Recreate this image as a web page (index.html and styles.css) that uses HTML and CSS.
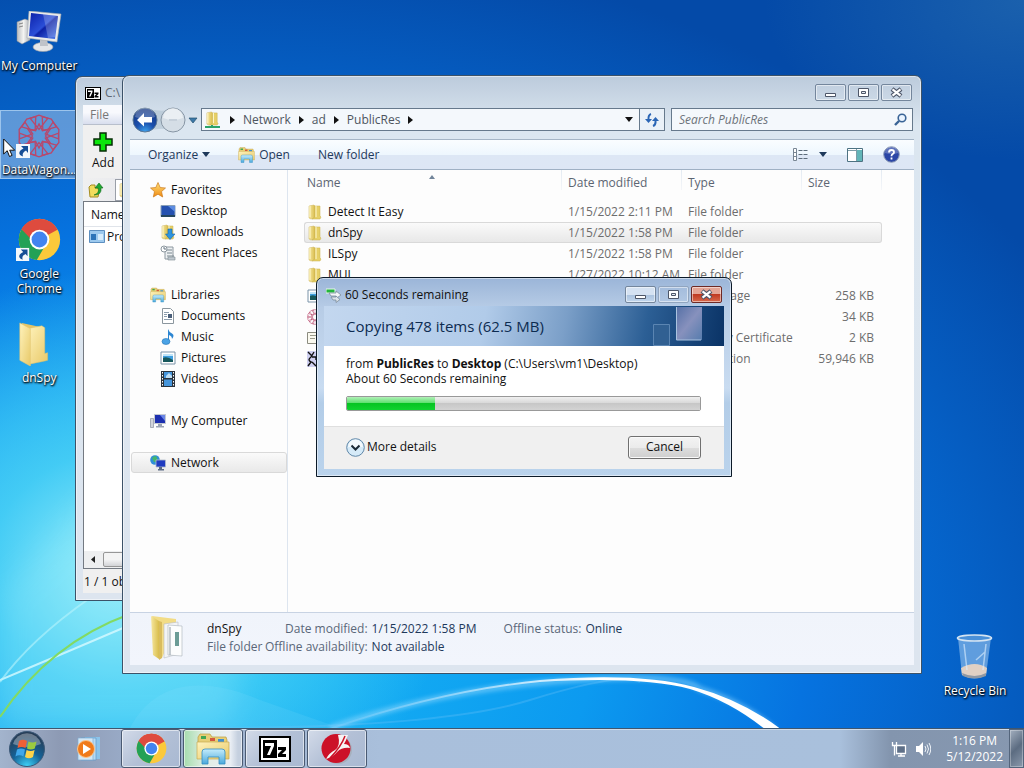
FILE: index.html
```html
<!DOCTYPE html>
<html lang="en">
<head>
  <meta charset="UTF-8" />
  <meta name="viewport" content="width=device-width, initial-scale=1.0"/>
  <title>Desktop</title>
  <link rel="stylesheet" href="styles.css">
</head>
<body>
  <!-- shared icons -->
  <svg class="defs" width="0" height="0" aria-hidden="true">
    <defs>
      <linearGradient id="gFolder" x1="0" y1="0" x2="1" y2="0"><stop offset="0" stop-color="#f6e7a0"/><stop offset="1" stop-color="#d9bd4c"/></linearGradient>
      <linearGradient id="gFront" x1="0" y1="0" x2="1" y2="1"><stop offset="0" stop-color="#fff3bd"/><stop offset="1" stop-color="#e8c968"/></linearGradient>
      <linearGradient id="gScreen" x1="0" y1="0" x2="1" y2="1"><stop offset="0" stop-color="#0a1fa8"/><stop offset=".5" stop-color="#2b4fd8"/><stop offset=".55" stop-color="#0d22a6"/><stop offset="1" stop-color="#4a7bf0"/></linearGradient>
      <linearGradient id="gCase" x1="0" y1="0" x2="1" y2="0"><stop offset="0" stop-color="#b9bcc0"/><stop offset=".5" stop-color="#f4f4f2"/><stop offset="1" stop-color="#a9adb4"/></linearGradient>
      <linearGradient id="gStar" x1="0" y1="0" x2="0" y2="1"><stop offset="0" stop-color="#ffe27a"/><stop offset="1" stop-color="#f08a12"/></linearGradient>
      <linearGradient id="gLib" x1="0" y1="0" x2="0" y2="1"><stop offset="0" stop-color="#c5ecfb"/><stop offset="1" stop-color="#4aa9dc"/></linearGradient>
      <radialGradient id="gBack" cx=".5" cy="1" r=".9"><stop offset="0" stop-color="#3fa5ee"/><stop offset=".45" stop-color="#1b50ad"/><stop offset="1" stop-color="#173a86"/></radialGradient>
      <radialGradient id="gOrb" cx=".5" cy="1" r=".9"><stop offset="0" stop-color="#3fd5fa"/><stop offset=".5" stop-color="#146297"/><stop offset="1" stop-color="#263d57"/></radialGradient>
    </defs>
    <symbol id="i-folder" viewBox="0 0 16 16">
      <path d="M2 2l5-1 1 1v12l-4 1-2-1z" fill="url(#gFolder)" stroke="#cdb35a" stroke-width=".5"/>
      <path d="M8 2h5v10l1 1-1 2H5l3-2z" fill="#e6d067" stroke="#c9b04e" stroke-width=".5"/>
      <path d="M9 2v11M3 2v11" stroke="#fff8d0" stroke-width="1"/>
    </symbol>
    <symbol id="i-bigfolder" viewBox="0 0 32 46">
      <path d="M3 1l23 5v28l-2 3-14 7z" fill="#e6c566"/>
      <path d="M9 7l15-3 3 2v27l3-1v8l-4 1-15 3z" fill="url(#gFront)" stroke="#dcc06a" stroke-width=".5"/>
      <path d="M1 1l11 6v39L1 40z" fill="url(#gFront)" stroke="#e3c775" stroke-width=".6"/>
    </symbol>
    <symbol id="i-computer" viewBox="0 0 46 42">
      <path d="M1 11l8-3 5 2v19l-8 4-5-3z" fill="url(#gCase)" stroke="#8b8f96" stroke-width=".5"/>
      <path d="M3 13l4-1M3 16l4-1" stroke="#888"/>
      <ellipse cx="27" cy="36" rx="10" ry="4.500" fill="#e4e6e8" stroke="#9a9ea5" stroke-width=".6"/>
      <path d="M24 27h7l1 8h-8z" fill="#bfc3c9"/>
      <path d="M13 0l32 3-4 28-30-4z" fill="#e9ebec" stroke="#a3a7ad" stroke-width=".6"/>
      <path d="M15 2l27 3-3 23-26-3z" fill="url(#gScreen)"/>
      <path d="M27 3l15 2-3 21-7 1z" fill="#fff" opacity=".22"/>
    </symbol>
    <symbol id="i-chrome" viewBox="0 0 48 48">
      <circle cx="24" cy="24" r="23" fill="#fbc93b"/>
      <path d="M24 24L4 12.500A23 23 0 0 1 44 13z" fill="#de4b3e"/>
      <path d="M4 12.500a23 23 0 0 0 17 34.300L32 28l-8 5z" fill="#23a156"/>
      <path d="M4 12.500L16 32l8-8-4-10z" fill="#23a156"/>
      <path d="M24 13h20a23 23 0 0 0-40-.5L15 24z" fill="#de4b3e"/>
      <circle cx="24" cy="24" r="11" fill="#fff"/><circle cx="24" cy="24" r="8.800" fill="#4284f0"/>
    </symbol>
    <symbol id="i-shortcut" viewBox="0 0 14 14">
      <path d="M0 0h14v14H0z" fill="#f4f8fc"/>
      <path d="M5 2h7v7l-2-2.500C7 8 6 10 7 12.500 2 11 2 7 7.500 4.500z" fill="#164e96"/>
    </symbol>
    <symbol id="i-7z" viewBox="0 0 32 26">
      <path d="M0 0h32v26H0z" fill="#000"/><path d="M2 2h28v22H2z" fill="#fff"/><path d="M4 4h14v18H4z" fill="#000"/>
      <path d="M6 7h9v3l-4 9H8l4-9H6z" fill="#fff"/><path d="M19 11h8v3l-4 4h4v3h-8v-3l4-4h-4z" fill="#000"/>
    </symbol>
    <symbol id="i-library" viewBox="0 0 34 32">
      <path d="M2 4l2-3h10l2 3h14l1 3v18H2z" fill="#e7cf76" stroke="#b99b42" stroke-width=".7"/>
      <path d="M5 3h5v3H5z" fill="#40a653"/><path d="M14 5h5v3h-5z" fill="#d3583e"/><path d="M22 6h6v3h-6z" fill="#408fd0"/>
      <path d="M1 9h32v17H1z" fill="url(#gFront)" stroke="#c7ab50" stroke-width=".7"/>
      <path d="M6 31V19q0-3 3-3h17q3 0 3 3v12h-6v-7H12v7z" fill="url(#gLib)" stroke="#338dc2" stroke-width=".8"/>
    </symbol>
    <symbol id="i-web" viewBox="0 0 40 40">
      <g fill="none" stroke="#b8486c" stroke-width="1.200">
        <path id="petal" d="M20 14L12 4l8-3 8 3z"/>
        <use href="#petal" transform="rotate(36 20 20)"/><use href="#petal" transform="rotate(72 20 20)"/><use href="#petal" transform="rotate(108 20 20)"/>
        <use href="#petal" transform="rotate(144 20 20)"/><use href="#petal" transform="rotate(180 20 20)"/><use href="#petal" transform="rotate(216 20 20)"/>
        <use href="#petal" transform="rotate(252 20 20)"/><use href="#petal" transform="rotate(288 20 20)"/><use href="#petal" transform="rotate(324 20 20)"/>
        <path d="M20 9l3 6 7-1-4 6 4 6-7-1-3 6-3-6-7 1 4-6-4-6 7 1z"/>
      </g>
    </symbol>
    <symbol id="i-picture" viewBox="0 0 16 16">
      <path d="M1 2h14v12H1z" fill="#fff" stroke="#7b93a8"/><path d="M3 4h10v8H3z" fill="#3f9fdf"/><path d="M3 8q4-2 10 2v2H3z" fill="#17585c"/><path d="M3 4h10v2H3z" fill="#bfe4f8"/>
    </symbol>
    <symbol id="i-min" viewBox="0 0 31 17"><path d="M10.500 9.500h10v3h-10z" fill="#fff" stroke="#4d5668"/></symbol>
    <symbol id="i-max" viewBox="0 0 31 17"><path d="M10.500 4.500h10v8h-10z" fill="#fff" stroke="#4d5668"/><path d="M13.500 7.500h4v2h-4z" fill="#e4ebf3" stroke="#4d5668"/></symbol>
    <symbol id="i-close" viewBox="0 0 31 17"><path d="M11 5l9 7M20 5l-9 7" stroke="#4d5668" stroke-width="4.500"/><path d="M11.500 5.400l8 6.200M19.500 5.400l-8 6.200" stroke="#fff" stroke-width="2.200"/></symbol>
    <symbol id="i-down" viewBox="0 0 8 5"><path d="M0 0h8L4 5z" fill="currentColor"/></symbol>
    <symbol id="i-right" viewBox="0 0 5 8"><path d="M0 0v8l5-4z" fill="#111"/></symbol>
  </svg>

  <main class="desktop">
    <svg class="wallpaper" viewBox="0 0 1024 728" preserveAspectRatio="none" aria-hidden="true">
      <defs>
        <filter id="soft" x="-20%" y="-50%" width="140%" height="200%"><feGaussianBlur stdDeviation="2"/></filter>
        <filter id="haze"><feGaussianBlur stdDeviation="14"/></filter>
        <linearGradient id="gArc" gradientUnits="userSpaceOnUse" x1="340" y1="0" x2="600" y2="0"><stop offset="0" stop-color="#8fd2fb" stop-opacity=".3"/><stop offset="1" stop-color="#fff"/></linearGradient>
      </defs>
      <path d="M0 590Q60 540 140 440T300 300L230 728H0z" fill="#a9f3fb" opacity=".22" filter="url(#haze)"/>
      <path d="M130 728C150 690 190 670 260 700L340 728z" fill="#9fe9fb" opacity=".12"/>
      <g fill="none">
        <path d="M0 680Q60 655 130 625" stroke="#d8faff" stroke-width="2" opacity=".8"/>
        <path d="M0 682Q30 640 90 598" stroke="#b8f3fb" stroke-width="2" opacity=".6"/>
        <path d="M0 717Q50 643 130 614" stroke="#83da62" stroke-width="2"/>
        <path d="M200 728Q440 728 530 700T640 682" stroke="#6fc4f8" stroke-width="2" opacity=".3"/>
        <path d="M330 728Q440 690 560 681T700 689Q745 703 775 730" stroke="#9bdcff" stroke-width="6" opacity=".5" filter="url(#soft)"/>
      </g>
      <path d="M330 728Q440 690 540 680Q640 672 694 687Q742 700 782 730H766Q730 701 690 689Q640 676 540 682Q440 692 333 729z" fill="url(#gArc)"/>
    </svg>

    <div class="shortcuts">
      <a class="shortcut" href="#"><svg class="pic" viewBox="0 0 46 42"><use href="#i-computer"/></svg><span>My Computer</span></a>
      <a class="shortcut selected" href="#"><svg class="pic" viewBox="0 0 46 44"><use href="#i-web" x="0" y="0" width="46" height="44"/><use href="#i-shortcut" x="0" y="30" width="14" height="14"/></svg><span>DataWagon...</span></a>
      <a class="shortcut" href="#"><svg class="pic" viewBox="0 0 48 46"><use href="#i-chrome" x="2" y="0" width="45" height="45"/><use href="#i-shortcut" x="0" y="31" width="14" height="14"/></svg><span>Google<br>Chrome</span></a>
      <a class="shortcut" href="#"><svg class="pic" viewBox="0 0 48 46"><use href="#i-bigfolder" x="3" y="0" width="32" height="46"/></svg><span>dnSpy</span></a>
    </div>

    <a class="shortcut recycle" href="#">
      <svg class="pic" viewBox="0 0 40 46">
        <path d="M3 4l4 37q13 7 24 0l5-37z" fill="#b9d9f5" opacity=".5"/>
        <path d="M6 34q14-8 26 0l-1 7q-12 6-24 0z" fill="#e0d0c4"/>
        <path d="M7 39q13 6 24 0v3q-12 5-23 0z" fill="#8f98a4"/>
        <path d="M9 10l3 26M31 10l-3 26M30 18l-9 8" stroke="#e1f1ff" stroke-width="1.500" opacity=".6"/>
        <ellipse cx="19.500" cy="4" rx="17" ry="3" fill="#4a90d8" stroke="#d5e4f2" stroke-width="1.600"/>
      </svg>
      <span>Recycle Bin</span>
    </a>

    <section class="window archiver">
      <header class="archiver-title"><svg width="16" height="13"><use href="#i-7z"/></svg><span>C:\</span></header>
      <div class="archiver-menu">File</div>
      <div class="archiver-tools">
        <button class="add-btn"><svg width="20" height="20" viewBox="0 0 20 20"><path d="M7 1h6v6h6v6h-6v6H7v-6H1V7h6z" fill="#0be60b" stroke="#062c06" stroke-width="1.500"/></svg>Add</button>
      </div>
      <div class="archiver-path">
        <svg width="16" height="16" viewBox="0 0 16 16"><path d="M1 5l2-2h4v3h5l-2 9H2z" fill="#f2dc5c" stroke="#a58c20"/><path d="M6 13q6-2 4-7H7l4-5 4 5h-2q1 7-7 7z" fill="#21a832" stroke="#116a1c" stroke-width=".6"/></svg>
        <div class="archiver-drop"><svg width="16" height="16"><use href="#i-folder"/></svg></div>
      </div>
      <div class="archiver-list">
        <div class="archiver-head">Name</div>
        <div class="archiver-row"><svg width="16" height="14" viewBox="0 0 16 14"><path d="M.5.5h15v12H.5z" fill="#9cc9ee" stroke="#5c8fc0"/><path d="M2 4h5v6H2z" fill="#2d74b8"/><path d="M9 4h5v6H9z" fill="#d6ecfb"/></svg>Program</div>
        <div class="archiver-scroll"><svg width="4" height="7" viewBox="0 0 4 7"><path d="M4 0v7L0 3.500z" fill="#222"/></svg><i></i></div>
      </div>
      <footer class="archiver-status">1 / 1 object</footer>
    </section>

    <section class="window explorer">
      <header class="caption">
        <button aria-label="Minimize"><svg><use href="#i-min"/></svg></button>
        <button aria-label="Maximize"><svg><use href="#i-max"/></svg></button>
        <button aria-label="Close"><svg><use href="#i-close"/></svg></button>
      </header>

      <nav class="navbar">
        <button class="nav-history" aria-label="Back and forward">
          <svg width="66" height="26" viewBox="0 0 66 26">
            <path d="M14 1q14 5 28 1v22q-14-5-28 1z" fill="#aebfcd" opacity=".6"/>
            <circle cx="13" cy="13" r="12" fill="url(#gBack)" stroke="#5c7896"/>
            <path d="M3 10a10 10 0 0 1 20 0q-10 4-20 0z" fill="#fff" opacity=".25"/>
            <path d="M5 13l7-7v4h8v5.500h-8v4z" fill="#fff"/>
            <circle cx="41" cy="13" r="12" fill="#d5dee6" stroke="#8796a5"/>
            <path d="M31 11a10 10 0 0 1 20 0q-10 4-20 0z" fill="#fff" opacity=".5"/>
            <path d="M37 13h8" stroke="#c6d0da" stroke-width="2"/>
            <path d="M57 11h8l-4 5z" fill="#3c78a8" stroke="#23506f" stroke-width=".7"/>
          </svg>
        </button>
        <div class="address">
          <svg width="18" height="18" viewBox="0 0 18 18"><use href="#i-folder" x="1" y="0" width="15" height="15"/><path d="M1 16h15M8 14v3" stroke="#2ba36b" stroke-width="2"/></svg>
          <svg width="5" height="8"><use href="#i-right"/></svg><a href="#">Network</a>
          <svg width="5" height="8"><use href="#i-right"/></svg><a href="#">ad</a>
          <svg width="5" height="8"><use href="#i-right"/></svg><a href="#">PublicRes</a>
          <svg width="5" height="8"><use href="#i-right"/></svg>
          <svg class="push" width="8" height="5"><use href="#i-down"/></svg>
        </div>
        <button class="refresh" aria-label="Refresh"><svg width="14" height="14" viewBox="0 0 14 14"><path d="M6 1Q3 2 3.500 7M8 13q3-1 2.500-6" fill="none" stroke="#2a65b5" stroke-width="2"/><path d="M0 6h7l-3.500 4zM7 8h7l-3.500-4z" fill="#2a65b5"/></svg></button>
        <div class="search">
          <input type="text" placeholder="Search PublicRes" aria-label="Search PublicRes">
          <svg width="13" height="13" viewBox="0 0 13 13"><circle cx="8" cy="5" r="3.800" fill="#eaf4ff" stroke="#3a6496" stroke-width="1.600"/><path d="M5 8l-4 4" stroke="#3a6496" stroke-width="2.400"/></svg>
        </div>
      </nav>

      <div class="toolbar">
        <button class="organize">Organize <svg width="8" height="5"><use href="#i-down"/></svg></button>
        <button class="open"><svg width="17" height="16"><use href="#i-library"/></svg>Open</button>
        <button>New folder</button>
        <button class="push views" aria-label="Views">
          <svg width="16" height="13" viewBox="0 0 16 13"><path d="M.5.5h3v12h-3z" fill="#fff" stroke="#788694"/><path d="M1 4.500h2M1 8.500h2" stroke="#788694"/><path d="M5.500 2.500h4m1 0h4m-9 4h4m1 0h4m-9 4h4m1 0h4" stroke="#5c6b7a"/></svg>
          <svg width="8" height="5"><use href="#i-down"/></svg>
        </button>
        <button aria-label="Preview pane"><svg width="16" height="14" viewBox="0 0 16 14"><path d="M.5.5h15v13H.5z" fill="#fff" stroke="#4d7282"/><path d="M10 2h5v11h-5z" fill="#62b5b8"/><path d="M1 2.500h9M9.500 1v12" stroke="#7e9da8"/></svg></button>
        <button aria-label="Help"><svg width="17" height="17" viewBox="0 0 17 17"><circle cx="8.500" cy="8.500" r="7.800" fill="#2b46a6" stroke="#8d9cb6"/><path d="M2 7a6.500 6.500 0 0 1 13 0q-6 2-13 0z" fill="#fff" opacity=".25"/><path d="M6 6.500q0-2.500 2.500-2.500T11 6.300q0 1-1.300 1.800T8.500 10.200M8.500 11.500v2" fill="none" stroke="#fff" stroke-width="1.800"/></svg></button>
      </div>

      <div class="content">
        <aside class="sidebar">
          <ul>
            <li><a href="#"><svg viewBox="0 0 16 16"><path d="M8 .5l2.200 5 5.300.5-4 3.600 1.200 5.400L8 12.200 3.300 15l1.200-5.400L.5 6l5.300-.5z" fill="url(#gStar)" stroke="#cc7a1c" stroke-width=".7"/></svg>Favorites</a></li>
            <li class="sub"><a href="#"><svg viewBox="0 0 16 16"><path d="M1 2.500h14v11H1z" fill="#2551b0" stroke="#8aa0b8"/><path d="M8 3h7v6z" fill="#5d8ce0"/><path d="M1 12h14v2H1z" fill="#25465e"/></svg>Desktop</a></li>
            <li class="sub"><a href="#"><svg viewBox="0 0 16 16"><use href="#i-folder"/><path d="M8 5h4v5h3l-5 5.500L5.500 10H8z" fill="#2f95df" stroke="#1565a8" stroke-width=".6"/></svg>Downloads</a></li>
            <li class="sub"><a href="#"><svg viewBox="0 0 16 16"><path d="M5 2h8v12H5z" fill="#edf0f2" stroke="#8c979f"/><path d="M7 5h5M7 8h5M7 11h7" stroke="#79878f"/><circle cx="4" cy="4" r="3" fill="#fff" stroke="#8c979f"/><path d="M4 2v2h2" fill="none" stroke="#657580"/><path d="M8 12h7v3H8z" fill="#bfc8cf" stroke="#7c8992" stroke-width=".6"/></svg>Recent Places</a></li>
          </ul>
          <ul>
            <li><a href="#"><svg viewBox="0 0 16 16"><use href="#i-library"/></svg>Libraries</a></li>
            <li class="sub"><a href="#"><svg viewBox="0 0 16 16"><path d="M2.500.5h8l3 3v12h-11z" fill="#fff" stroke="#8b969e"/><path d="M4 4.500h5M4 6.500h3M4 8.500h3M4 11.500h8" stroke="#8c9dad"/><path d="M8 6h4v4H8z" fill="#4a5f7a"/></svg>Documents</a></li>
            <li class="sub"><a href="#"><svg viewBox="0 0 16 16"><path d="M8 12V0q1 3 4 4.500T12 10q0-3-3-4v6.500z" fill="#2c86d2"/><ellipse cx="6" cy="12.500" rx="4" ry="3" fill="#4ba3e6" stroke="#2373b5" stroke-width=".6"/></svg>Music</a></li>
            <li class="sub"><a href="#"><svg viewBox="0 0 16 16"><use href="#i-picture"/></svg>Pictures</a></li>
            <li class="sub"><a href="#"><svg viewBox="0 0 16 16"><path d="M1 0h14v16H1z" fill="#2b333c"/><path d="M4 1h8v6H4zM4 8.500h8v6.500H4z" fill="#4696dc"/><path d="M6 5l3-3 3 3v2H6z" fill="#bfdff5"/><path d="M2.500 1v14M13.500 1v14" stroke="#fff" stroke-dasharray="1.500 1.500"/></svg>Videos</a></li>
          </ul>
          <ul>
            <li><a href="#"><svg viewBox="0 0 16 16"><path d="M.5 5.500h3v9h-3z" fill="#d2d5dc" stroke="#8d93a0" stroke-width=".7"/><path d="M4.500 1.500h11v9h-11z" fill="#1c2fb0" stroke="#c3c8d2"/><path d="M10 2h5v6z" fill="#6a86e6"/><path d="M8 11h4v2h2v1.500H6V13h2z" fill="#9aa3b4"/></svg>My Computer</a></li>
          </ul>
          <ul>
            <li class="current"><a href="#"><svg viewBox="0 0 16 16"><circle cx="5" cy="5" r="4.800" fill="#2e8fd8"/><path d="M2 3q4-4 5 0T4 7z" fill="#45b56d"/><path d="M6 5h9.500v7H6z" fill="#1f3bc0" stroke="#b3bdca" stroke-width=".8"/><path d="M9 12h3v2h2v1.500H8V14h1z" fill="#5b6b86"/></svg>Network</a></li>
          </ul>
        </aside>

        <div class="files">
          <table>
            <colgroup><col><col class="c-date"><col class="c-type"><col class="c-size"></colgroup>
            <thead>
              <tr><th class="sorted">Name</th><th>Date modified</th><th>Type</th><th>Size</th></tr>
            </thead>
            <tbody>
              <tr><td><svg><use href="#i-folder"/></svg>Detect It Easy</td><td>1/15/2022 2:11 PM</td><td>File folder</td><td></td></tr>
              <tr class="active"><td><svg><use href="#i-folder"/></svg>dnSpy</td><td>1/15/2022 1:58 PM</td><td>File folder</td><td></td></tr>
              <tr><td><svg><use href="#i-folder"/></svg>ILSpy</td><td>1/15/2022 1:58 PM</td><td>File folder</td><td></td></tr>
              <tr><td><svg><use href="#i-folder"/></svg>MUI</td><td>1/27/2022 10:12 AM</td><td>File folder</td><td></td></tr>
              <tr><td><svg><use href="#i-picture"/></svg></td><td></td><td>PNG image</td><td>258 KB</td></tr>
              <tr><td><svg><use href="#i-web"/></svg></td><td></td><td></td><td>34 KB</td></tr>
              <tr><td><svg viewBox="0 0 16 16"><path d="M.5 2.500h15v11H.5z" fill="#fbfaf0" stroke="#8c8c80"/><path d="M3 5.500h8M3 8.500h5" stroke="#9c9c8c"/></svg></td><td></td><td>Security Certificate</td><td>2 KB</td></tr>
              <tr><td><svg viewBox="0 0 16 16"><path d="M0 0h16v16H0z" fill="#cfd0f0"/><path d="M1 1l4 4M7 1L4 6q-4 3 0 5l-3 4M5 11l4 4M5 6h4v3" fill="none" stroke="#111" stroke-width="1.400"/></svg></td><td></td><td>Application</td><td>59,946 KB</td></tr>
            </tbody>
          </table>
        </div>
      </div>

      <footer class="details">
        <svg width="38" height="46" viewBox="0 0 38 46">
          <path d="M2 1l24 3v6l-14 33z" fill="#f2dc86"/>
          <path d="M14 9l14-2v32l-14 4z" fill="#f3f4f5" stroke="#b9bec4" stroke-width=".6"/>
          <path d="M18 10l14 1v30l-14-1z" fill="#fcfdfd" stroke="#aab2ba" stroke-width=".6"/>
          <path d="M25 17h4v14h-4z" fill="#6c9c96"/><path d="M20 12v28" stroke="#8e9aa3"/>
          <path d="M1 1l8 5v38l-6-4z" fill="url(#gFolder)"/>
          <path d="M9 6l3 1v36l-3 2z" fill="#d9bc5e"/>
        </svg>
        <div class="facts">
          <strong>dnSpy</strong><span class="label">Date modified:</span><span>1/15/2022 1:58 PM</span><span class="label">Offline status:</span><span>Online</span>
          <span class="kind">File folder</span><span class="label">Offline availability:</span><span>Not available</span>
        </div>
      </footer>
    </section>

    <section class="window dialog" role="dialog" aria-label="60 Seconds remaining">
      <header class="caption">
        <svg width="16" height="16" viewBox="0 0 16 16"><path d="M0 2h9v4H0z" fill="#23b53c" stroke="#e4f7e6"/><path d="M3 6h7V4l5 4-5 3.500V9H5z" fill="#f5f7f8" stroke="#7c8d9c" stroke-width=".8"/><path d="M5 10h5v-1l4 3.500-4 3V13H7z" fill="#dfe5ea" stroke="#7c8d9c" stroke-width=".8"/></svg>
        <h2>60 Seconds remaining</h2>
        <button aria-label="Minimize"><svg><use href="#i-min"/></svg></button>
        <button aria-label="Maximize" disabled><svg><use href="#i-max"/></svg></button>
        <button class="close" aria-label="Close"><svg><use href="#i-close"/></svg></button>
      </header>
      <div class="banner">
        <h1>Copying 478 items (62.5 MB)</h1>
        <svg width="110" height="40" viewBox="0 0 110 40" aria-hidden="true">
          <defs><linearGradient id="gTile" x1="0" y1="0" x2="1" y2="1"><stop offset="0" stop-color="#5570a6"/><stop offset=".5" stop-color="#8791bd"/><stop offset="1" stop-color="#567cad"/></linearGradient></defs>
          <path d="M39.500 18.500h16v21h-16z" fill="#316092" stroke="#5b85b2"/>
          <path d="M62 1h26v33H62z" fill="url(#gTile)"/><path d="M62.500 1v33H87" fill="none" stroke="#aac3e0"/>
        </svg>
      </div>
      <div class="dialog-body">
        <p>from <b>PublicRes</b> to <b>Desktop</b> (C:\Users\vm1\Desktop)</p>
        <p>About 60 Seconds remaining</p>
        <progress value="25" max="100" aria-label="Copy progress"></progress>
      </div>
      <footer class="dialog-foot">
        <button class="more"><svg width="19" height="19" viewBox="0 0 19 19"><circle cx="9.500" cy="9.500" r="8.800" fill="#d5eaf8" stroke="#5f87a8"/><path d="M2 9a7.500 7.500 0 0 1 15 0z" fill="#fff" opacity=".7"/><path d="M5.500 7.500l4 4 4-4" fill="none" stroke="#1b2a36" stroke-width="2"/></svg>More details</button>
        <button class="cancel">Cancel</button>
      </footer>
    </section>

    <svg class="cursor" width="13" height="20" viewBox="0 0 13 20"><path d="M.7 1v15l3.500-3.300L6.500 18.500l2.600-1.100-2.400-5.200h5z" fill="#fff" stroke="#111"/></svg>
  </main>

  <footer class="taskbar">
    <button class="start" aria-label="Start">
      <svg width="38" height="38" viewBox="0 0 38 38">
        <circle cx="19" cy="19" r="17.500" fill="url(#gOrb)" stroke="#3b5877"/>
        <path d="M5 14a14.500 14.500 0 0 1 28 0q-14 6-28 0z" fill="#fff" opacity=".32"/>
        <path d="M11 11q4-2.500 8 0l-1.500 7q-4-2-8 0z" fill="#ef6036"/><path d="M20.500 11.500q4 2 8 0l-1.700 7q-4 2-7.800 0z" fill="#9bcb3f"/>
        <path d="M9 19.500q4-2 8 0l-1.600 7q-4-2.500-8 0z" fill="#3fa7ea"/><path d="M18.600 20q4 2.200 8 0L25 27q-4 2.500-8 0z" fill="#fcd34a"/>
      </svg>
    </button>
    <button class="pinned" aria-label="Media Player">
      <svg width="26" height="26" viewBox="0 0 26 26"><path d="M9 1h15v22H9z" fill="#8cc4ea"/><path d="M5 2h15v22H5z" fill="#b7daf2" stroke="#5f9ac8" stroke-width=".7"/><path d="M2 2h15v22H2z" fill="#d3e7f5" stroke="#7eaed2" stroke-width=".7"/><circle cx="10" cy="13" r="8.500" fill="#f07a1a" stroke="#fbc48b"/><path d="M7 8l8 5-8 5z" fill="#fff"/></svg>
    </button>
    <div class="apps">
      <button aria-label="Google Chrome"><svg width="31" height="31"><use href="#i-chrome"/></svg></button>
      <button class="busy" aria-label="Windows Explorer"><svg width="34" height="32"><use href="#i-library"/></svg></button>
      <button aria-label="7-Zip"><svg width="32" height="26"><use href="#i-7z"/></svg></button>
      <button aria-label="Viewer"><svg width="32" height="32" viewBox="0 0 32 32"><circle cx="17" cy="17" r="14" fill="#a6b0bd"/><circle cx="15" cy="15.500" r="14.500" fill="#cc1128"/><path d="M17 2h10q-2 6-4 9 5 0 6 4-8-1-13 4-4 5-11 7 3-6 9-9 6-4 3-15z" fill="#f6f3f3"/><path d="M24 3Q20 14 9 25" stroke="#cc1128" fill="none" stroke-width="1.500"/></svg></button>
    </div>
    <div class="tray">
      <svg width="16" height="16" viewBox="0 0 16 16"><path d="M5.500 4.500h9v8h-9z" fill="#5f7088" stroke="#fff" stroke-width="1.300"/><path d="M1.500 1v3.500h4V1M3.500 4.500v10M7 15h7M10 12v3" fill="none" stroke="#fff" stroke-width="1.300"/></svg>
      <svg width="16" height="16" viewBox="0 0 16 16"><path d="M1 5h3l4-4v14l-4-4H1z" fill="#fff"/><path d="M10 5q2 3 0 6M12 3.500q3 4.500 0 9M14 2q3.500 6 0 12" fill="none" stroke="#eef3f8"/></svg>
    </div>
    <div class="clock"><time>1:16 PM</time><time>5/12/2022</time></div>
    <button class="peek" aria-label="Show desktop"></button>
  </footer>
</body>
</html>
```

FILE: styles.css
```css
* {
  box-sizing: border-box;
}

body {
  margin: 0;
  height: 100vh;
  display: flex;
  flex-direction: column;
  overflow: hidden;
  font-family: "Open Sans", "Noto Sans", sans-serif;
  font-size: 12px;
  line-height: 16px;
  color: #111;
}

button {
  font: inherit;
  color: inherit;
  background: none;
  border: none;
  padding: 0;
}

a {
  color: inherit;
  text-decoration: none;
}

svg {
  display: block;
  flex: none;
}

h1, h2, p, ul {
  margin: 0;
  padding: 0;
  font-weight: normal;
}

.defs {
  position: absolute;
}

.push {
  margin-left: auto;
}

/* desktop */
.desktop {
  flex: 1;
  position: relative;
  overflow: hidden;
  background:
    radial-gradient(ellipse 260px 160px at 100% 0, rgba(60, 130, 180, 0.4), rgba(60, 130, 180, 0) 100%),
    radial-gradient(ellipse 330px 300px at 120px 570px, #9aeefa 0%, rgba(80, 214, 246, 0.8) 40%, rgba(20, 170, 240, 0) 100%),
    radial-gradient(ellipse 960px 700px at 230px 640px, #18b8f4 0%, #0c9af0 38%, #0673e0 60%, #055cc0 82%, #044aa8 100%);
}

.wallpaper {
  position: absolute;
  width: 100%;
  height: 100%;
}

.shortcuts {
  position: absolute;
  top: 6px;
  left: 0;
  width: 76px;
  display: grid;
  grid-auto-rows: 69px;
  gap: 35px;
}

.shortcut {
  display: flex;
  flex-direction: column;
  align-items: center;
  gap: 3px;
  padding: 2px 0;
  border: 1px solid transparent;
  color: #fff;
  line-height: 15px;
  text-align: center;
  white-space: nowrap;
  text-shadow: 1px 1px 2px #000, 0 1px 2px #000;
}

.shortcut .pic {
  width: 46px;
  height: 46px;
}

.shortcut.selected {
  background: rgba(140, 180, 225, 0.65);
  border-color: #9cc4ec;
}

.recycle {
  position: absolute;
  right: 10px;
  bottom: 27px;
  width: 78px;
}

.cursor {
  position: absolute;
  left: 3px;
  top: 138px;
}

/* windows */
.window {
  position: absolute;
  display: flex;
  flex-direction: column;
  padding: 0 7px 7px;
  border: 1px solid #3c5268;
  border-radius: 7px 7px 0 0;
  background: linear-gradient(#bccbdc, #dbe6f0 50px, #dde5ef);
  box-shadow: inset 0 0 0 1px rgba(255, 255, 255, 0.5);
}

.caption {
  display: flex;
  justify-content: flex-end;
  gap: 2px;
}

.caption button {
  width: 31px;
  height: 17px;
  border: 1px solid #74869c;
  border-radius: 2px;
  box-shadow: inset 0 0 0 1px rgba(255, 255, 255, 0.5);
}

.caption button svg {
  width: 31px;
  height: 17px;
  margin: -1px;
}

/* archiver */
.archiver {
  left: 75px;
  top: 76px;
  bottom: 127px;
  width: 140px;
}

.archiver-title {
  display: flex;
  align-items: center;
  gap: 4px;
  height: 28px;
  padding: 4px 2px 0;
  color: #5e6873;
}

.archiver-menu {
  height: 20px;
  padding: 2px 7px;
  background: linear-gradient(#f8f9fd 40%, #d8deee);
  border-bottom: 1px solid #b8bfcc;
  color: #777;
}

.archiver-tools {
  height: 53px;
  padding: 7px 9px;
  background: #f0f0f0;
}

.add-btn {
  display: flex;
  flex-direction: column;
  align-items: center;
  gap: 3px;
}

.archiver-path {
  display: flex;
  align-items: center;
  gap: 11px;
  height: 23px;
  padding-left: 5px;
  background: linear-gradient(90deg, #f0f0f0, #d9dcea);
}

.archiver-drop {
  flex: 1;
  padding: 2px;
  border: 1px solid #9a9fa8;
  background: #fff;
}

.archiver-list {
  flex: 1;
  display: flex;
  flex-direction: column;
  border: 1px solid #747a82;
  background: #fff;
}

.archiver-head {
  padding: 5px 7px 3px;
  border-bottom: 1px solid #e0e4ea;
}

.archiver-row {
  display: flex;
  align-items: center;
  gap: 2px;
  padding: 2px 5px;
}

.archiver-scroll {
  display: flex;
  align-items: center;
  gap: 8px;
  margin-top: auto;
  padding-left: 7px;
  height: 17px;
  background: #eeeff0;
}

.archiver-scroll i {
  flex: 1;
  height: 15px;
  border: 1px solid #979797;
  border-radius: 2px;
  background: linear-gradient(#f4f4f4 50%, #d2d3d6);
}

.archiver-status {
  height: 24px;
  padding: 5px 1px;
  background: #f0f0f0;
}

/* explorer */
.explorer {
  left: 122px;
  top: 75px;
  right: 102px;
  bottom: 54px;
  padding: 0 7px 8px;
}

.explorer > .caption {
  height: 30px;
  padding: 8px 2px 0;
}

.navbar {
  display: flex;
  align-items: center;
  height: 27px;
  padding: 0 1px 0 2px;
}

.nav-history {
  margin-right: 3px;
}

.address {
  flex: 1;
  display: flex;
  align-items: center;
  gap: 8px;
  height: 23px;
  padding: 0 6px 0 2px;
  border: 1px solid #66798c;
  background: #f4f8fc;
  color: #4d555e;
}

.address .push {
  color: #111;
}

.refresh {
  display: grid;
  place-items: center;
  width: 25px;
  height: 23px;
  margin-right: 6px;
  border: 1px solid #66798c;
  border-left: none;
  background: #eaf1f8;
}

.search {
  display: flex;
  align-items: center;
  width: 242px;
  height: 23px;
  padding: 0 5px 0 7px;
  border: 1px solid #66798c;
  background: #f4f8fc;
}

.search input {
  flex: 1;
  min-width: 0;
  padding: 0;
  border: none;
  background: none;
  font: inherit;
}

.search input::placeholder {
  color: #6d737a;
  font-style: italic;
}

.toolbar {
  display: flex;
  align-items: center;
  height: 31px;
  margin-top: 6px;
  padding: 0 14px 0 18px;
  border-top: 1px solid #a5b5c6;
  border-bottom: 1px solid #9fb0c4;
  background: linear-gradient(#fafdff 0%, #eef7fe 50%, #dde7f5 51%, #dde6f5 100%);
  color: #1e395b;
}

.toolbar button {
  display: flex;
  align-items: center;
  gap: 4px;
}

.toolbar .organize,
.toolbar .open {
  margin-right: 28px;
}

.toolbar .views {
  gap: 10px;
  margin-left: auto;
}

.toolbar .views ~ button {
  margin-left: 20px;
}

.content {
  flex: 1;
  display: flex;
  min-height: 0;
  background: #fdfdfd;
}

.sidebar {
  display: flex;
  flex-direction: column;
  gap: 21px;
  width: 158px;
  padding: 9px 0 0 1px;
  border-right: 1px solid #dde5ef;
}

.sidebar ul {
  list-style: none;
}

.sidebar a {
  display: flex;
  align-items: center;
  gap: 5px;
  height: 21px;
  padding-left: 18px;
  border: 1px solid transparent;
}

.sidebar .sub a {
  padding-left: 28px;
}

.sidebar svg {
  width: 16px;
  height: 16px;
}

.sidebar .current a {
  border-color: #d9d9d9;
  border-radius: 3px;
  background: linear-gradient(#fafafa, #e9e9e9);
}

.files {
  flex: 1;
  padding-left: 16px;
}

.files table {
  width: 578px;
  table-layout: fixed;
  border-collapse: separate;
  border-spacing: 0;
}

.c-date,
.c-type {
  width: 120px;
}

.c-size {
  width: 80px;
}

.files th {
  height: 25px;
  padding: 0 3px 0 6px;
  background: linear-gradient(#e3eaf2, #f4f6f9) no-repeat right top / 1px 20px;
  color: #5c6572;
  font-weight: normal;
  text-align: left;
}

.files th:first-child {
  padding-left: 3px;
}

.sorted::before {
  content: "";
  float: right;
  width: 0;
  margin-right: 124px;
  border: 3px solid transparent;
  border-top: none;
  border-bottom: 4px solid #71849a;
}

.files tbody::before {
  content: "";
  display: block;
  height: 6px;
}

.files td {
  height: 21px;
  padding: 0 6px;
  border: 1px solid transparent;
  border-width: 1px 0;
  color: #6d6d6d;
  white-space: nowrap;
}

.files td:first-child {
  display: flex;
  align-items: center;
  gap: 5px;
  padding-left: 3px;
  color: #111;
}

.files td:last-child {
  padding-right: 8px;
  text-align: right;
}

.files td svg {
  width: 16px;
  height: 16px;
}

.files .active td {
  border-color: #d9d9d9;
  background: linear-gradient(#fafafa, #e8e8e8);
}

.files .active td:first-child {
  border-left: 1px solid #d9d9d9;
  border-radius: 3px 0 0 3px;
  padding-left: 2px;
}

.files .active td:last-child {
  border-right: 1px solid #d9d9d9;
  border-radius: 0 3px 3px 0;
}

.details {
  display: flex;
  align-items: center;
  gap: 19px;
  height: 53px;
  padding: 0 0 2px 20px;
  border-top: 1px solid #c8d3e3;
  background: linear-gradient(#f0f4fb, #f2f5fc);
}

.facts {
  display: grid;
  grid-template-columns: 54px auto 128px auto auto;
  column-gap: 4px;
  line-height: 18px;
  color: #1e395b;
  white-space: nowrap;
}

.facts strong {
  color: #111;
  font-weight: normal;
}

.facts .label,
.facts .kind {
  color: #5a6779;
}

.facts .label {
  text-align: right;
}

/* copy dialog */
.dialog {
  left: 316px;
  top: 277px;
  width: 416px;
  border-color: #0c1a28;
  background: linear-gradient(#9bb5d8, #b7cce6 30px, #c9dcf1 110px, #b3cde8 125px, #bad3ec);
}

.dialog .caption {
  align-items: center;
  height: 28px;
  padding: 5px 2px 0 2px;
}

.dialog .caption h2 {
  margin: 0 auto 0 1px;
  font-size: 12px;
}

.dialog .caption > button {
  background: linear-gradient(#d5e2f2 50%, #a9c1dd 51%, #c2d7ee);
}

.dialog .caption > button:disabled {
  background: none;
  border-color: #91a5bf;
}

.dialog .caption > .close {
  background: linear-gradient(#e4a596 45%, #c03a22 50%, #d8694c);
  border-color: #6d2a26;
}

.banner {
  display: flex;
  align-items: center;
  height: 40px;
  padding-left: 22px;
  background: linear-gradient(100deg, #c3d7ef 0%, #b1cbe9 40%, #7b9fc8 60%, #2c5f95 80%, #0a3366 100%);
}

.banner h1 {
  flex: 1;
  font-size: 15px;
  line-height: 20px;
  color: #0c2b50;
  white-space: nowrap;
}

.dialog-body {
  padding: 10px 23px 15px 22px;
  background: #fff;
  line-height: 15px;
}

.dialog-body progress {
  display: block;
  width: 100%;
  height: 15px;
  margin-top: 10px;
  appearance: none;
  border: 1px solid #999;
  border-radius: 2px;
  overflow: hidden;
}

progress::-webkit-progress-bar {
  background: linear-gradient(#f0f0f0, #d9d9d9 45%, #c7c7c7 50%, #d3d3d3);
}

progress::-webkit-progress-value {
  background: linear-gradient(#b2f0b8, #5fe070 45%, #06c422 50%, #10d230);
}

.dialog-foot {
  display: flex;
  align-items: center;
  justify-content: space-between;
  height: 43px;
  padding: 0 23px 2px 22px;
  border-top: 1px solid #dfdfdf;
  background: #f0f0f0;
}

.more {
  display: flex;
  align-items: center;
  gap: 2px;
}

.cancel {
  width: 73px;
  height: 23px;
  border: 1px solid #707070;
  border-radius: 3px;
  background: linear-gradient(#f3f3f3 0%, #ebebeb 50%, #dddddd 51%, #cfcfcf 100%);
  box-shadow: inset 0 0 0 1px #fafafa;
}

/* taskbar */
.taskbar {
  display: flex;
  align-items: center;
  height: 40px;
  border-top: 1px solid #3f566f;
  background: linear-gradient(90deg, #a3b4cd 0, #8d9ab4 60px, #98a9c5 120px, #a9bfdb 380px, #a9c0dc 840px, #8395ae 890px, #8798b0 100%);
  box-shadow: inset 0 1px 0 #d0dcea;
}

.start {
  margin-left: 8px;
}

.pinned {
  margin: 0 19px 0 30px;
}

.apps {
  display: flex;
  align-self: stretch;
  gap: 2px;
  margin-right: auto;
}

.apps button {
  display: grid;
  place-items: center;
  width: 60px;
  border: 1px solid #4a5a72;
  border-radius: 3px;
  background: linear-gradient(135deg, #d3dbe9, #b3c0d6 50%, #a9b9d2);
  box-shadow: inset 0 0 0 1px rgba(255, 255, 255, 0.55);
}

.apps .busy {
  background: linear-gradient(90deg, #a6dcae, #e0eee4 35%, #e9eef4 80%, #c5d0df 93%);
}

.tray {
  display: flex;
  gap: 8px;
  margin-right: 15px;
}

.clock {
  display: flex;
  flex-direction: column;
  align-items: center;
  margin-right: 6px;
  color: #fff;
}

.peek {
  align-self: stretch;
  width: 15px;
  border: 1px solid #54657c;
  background: linear-gradient(135deg, #a3afbf, #5c6c81 50%, #8b99ac);
  box-shadow: inset 0 0 0 1px rgba(255, 255, 255, 0.3);
}
```
